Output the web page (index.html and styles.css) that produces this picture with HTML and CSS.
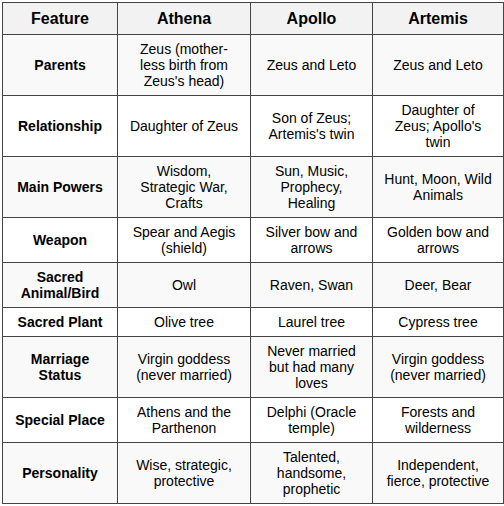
FILE: index.html
```html
<!DOCTYPE html>
<html>
<head>
<meta charset="utf-8">
<link rel="stylesheet" href="styles.css">
</head>
<body>
<table class="gods">
  <colgroup>
    <col class="c1"><col class="c2"><col class="c3"><col class="c4">
  </colgroup>
  <thead>
    <tr><th>Feature</th><th>Athena</th><th>Apollo</th><th>Artemis</th></tr>
  </thead>
  <tbody>
    <tr><td class="label">Parents</td><td>Zeus (mother-less birth from Zeus's head)</td><td>Zeus and Leto</td><td>Zeus and Leto</td></tr>
    <tr><td class="label">Relationship</td><td>Daughter of Zeus</td><td>Son of Zeus; Artemis's twin</td><td>Daughter of Zeus; Apollo's twin</td></tr>
    <tr><td class="label">Main Powers</td><td>Wisdom, Strategic War, Crafts</td><td>Sun, Music, Prophecy, Healing</td><td>Hunt, Moon, Wild Animals</td></tr>
    <tr><td class="label">Weapon</td><td>Spear and Aegis (shield)</td><td>Silver bow and arrows</td><td>Golden bow and arrows</td></tr>
    <tr><td class="label">Sacred Animal/Bird</td><td>Owl</td><td>Raven, Swan</td><td>Deer, Bear</td></tr>
    <tr><td class="label">Sacred Plant</td><td>Olive tree</td><td>Laurel tree</td><td>Cypress tree</td></tr>
    <tr><td class="label">Marriage Status</td><td>Virgin goddess (never married)</td><td>Never married but had many loves</td><td>Virgin goddess (never married)</td></tr>
    <tr><td class="label">Special Place</td><td>Athens and the Parthenon</td><td>Delphi (Oracle temple)</td><td>Forests and wilderness</td></tr>
    <tr><td class="label">Personality</td><td>Wise, strategic, protective</td><td>Talented, handsome, prophetic</td><td>Independent, fierce, protective</td></tr>
  </tbody>
</table>
</body>
</html>
```

FILE: styles.css
```css
html, body {
  margin: 0;
  padding: 0;
  background: #fff;
}
body {
  padding: 2px;
  font-family: "Liberation Sans", Arial, sans-serif;
  font-size: 14px;
  color: #000;
}
.gods {
  border-collapse: collapse;
  table-layout: fixed;
  width: 501px;
}
.c1 { width: 115px; }
.c2 { width: 133px; }
.c3 { width: 122px; }
.c4 { width: 131px; }
.gods th, .gods td {
  border: 1px solid #444;
  padding: 6px 10px;
  text-align: center;
  vertical-align: middle;
  line-height: 16px;
}
.gods th {
  background: #f2f2f2;
  font-size: 16px;
  font-weight: bold;
  line-height: 19px;
}
.gods tbody tr:nth-child(odd) {
  background: #f9f9f9;
}
.gods td.label {
  font-weight: bold;
}
```
